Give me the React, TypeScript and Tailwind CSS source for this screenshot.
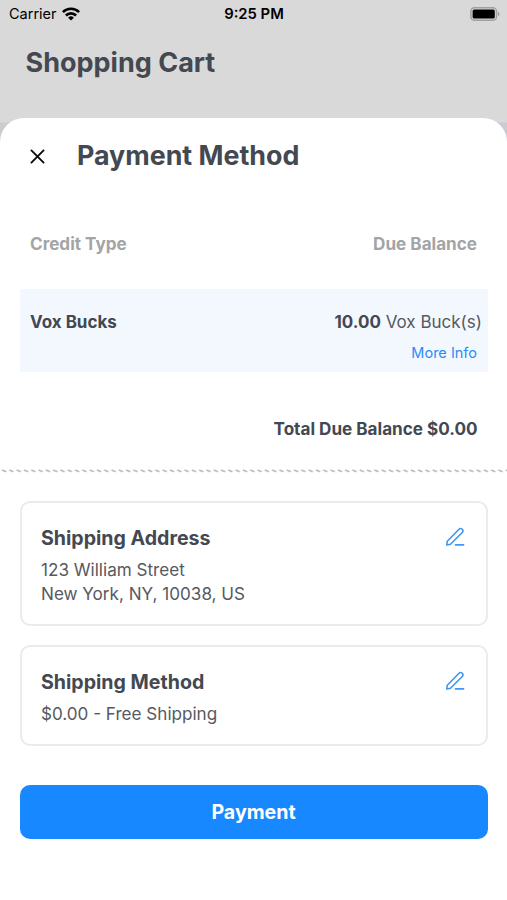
const creditRows = [{ name: 'Vox Bucks', amount: '10.00', unit: 'Vox Buck(s)' }];

const shippingCards = [
  {
    title: 'Shipping Address',
    lines: ['123 William Street', 'New York, NY, 10038, US'],
    size: 'h-[125px]',
  },
  {
    title: 'Shipping Method',
    lines: ['$0.00 - Free Shipping'],
    size: 'mt-[19px] h-[101px]',
  },
];

const WifiIcon = () => (
  <svg width="18" height="14" viewBox="0 0 18 14" fill="none" stroke="#000" strokeWidth="2.6">
    <path d="M0.9 5.2a11.4 11.4 0 0 1 16.2 0" />
    <path d="M3.9 8.5a7.2 7.2 0 0 1 10.2 0" />
    <path d="M9 13.6 6.1 10.7a4.1 4.1 0 0 1 5.8 0z" fill="#000" stroke="none" />
  </svg>
);

const BatteryIcon = () => (
  <svg width="31" height="14" viewBox="0 0 31 14" fill="none">
    <rect x="0.9" y="0.7" width="25.6" height="12.6" rx="3.6" stroke="#a0a0a0" strokeWidth="1.5" />
    <rect x="2.6" y="2.4" width="22.2" height="9.2" rx="1.6" fill="#000" />
    <path d="M28.1 4.8a2.5 2.5 0 0 1 0 4.4z" fill="#909090" />
  </svg>
);

const CloseIcon = () => (
  <svg width="15" height="15" viewBox="0 0 15 15" stroke="#0b0b0b" strokeWidth="1.9" strokeLinecap="round">
    <path d="M1.4 1.4 13.6 13.6M13.6 1.4 1.4 13.6" />
  </svg>
);

const EditIcon = () => (
  <svg
    width="20"
    height="20"
    viewBox="0 0 20 20"
    fill="none"
    stroke="#4294f7"
    strokeWidth="1.6"
    strokeLinecap="round"
    strokeLinejoin="round"
  >
    <path d="M1.8 18 2.3 14.2 14 2.3a2.2 2.2 0 0 1 3.2 3.2L5.5 17.3z" />
    <path d="M10.4 17.9H18.6" />
  </svg>
);

// Slanted dashes across the full width of the sheet
const Divider = () => (
  <svg className="block" width="507" height="4" viewBox="0 0 507 4">
    <defs>
      <pattern id="dashes" width="7.3" height="4" patternUnits="userSpaceOnUse" x="1.3">
        <path d="M0.7 1 4.9 2.8" stroke="#bababa" strokeWidth="1.7" />
      </pattern>
    </defs>
    <rect width="507" height="4" fill="url(#dashes)" />
  </svg>
);

const App = () => {
  return (
    <div className="flex h-[900px] w-[507px] flex-col overflow-hidden bg-[#d9d9d9] font-['Inter',sans-serif] text-[#434851]">
      <header className="h-[118px] shrink-0">
        <div className="flex h-7 items-center justify-between pl-[9px] pr-[6px] text-black">
          <div className="flex flex-1 items-center gap-[5px] text-[14.5px]">
            <span>Carrier</span>
            <WifiIcon />
          </div>
          <span className="pr-0.5 text-[14.8px] font-semibold">9:25 PM</span>
          <div className="flex flex-1 justify-end pb-px">
            <BatteryIcon />
          </div>
        </div>
        <h1 className="mt-[15px] pl-[25.5px] text-[27px] leading-10 font-bold">Shopping Cart</h1>
      </header>

      <div className="flex-1 bg-linear-to-b from-[#d9d9d9] from-[4px] to-[#c9ccd0] to-[5px]">
        <main className="h-full rounded-t-[24px] bg-white">
          <div className="flex h-[75px] items-center pl-[30px]">
            <button aria-label="Close" className="pt-px">
              <CloseIcon />
            </button>
            <h2 className="ml-8 text-[26.8px] font-bold">Payment Method</h2>
          </div>

          <div className="flex h-[96px] items-center justify-between pt-[5px] pr-[30px] pl-[30px] text-[17.1px] font-bold text-[#a3a4a6]">
            <span>Credit Type</span>
            <span>Due Balance</span>
          </div>

          {creditRows.map((row) => (
            <div key={row.name} className="mr-[19px] ml-5 flex h-[83px] justify-between bg-[#f3f8ff] pt-[21px] pl-[10px] text-[17px]">
              <span className="font-bold">{row.name}</span>
              <div className="flex flex-col items-end pr-[6px]">
                <span>
                  <b className="font-bold">{row.amount}</b> <span className="text-[#56595e]">{row.unit}</span>
                </span>
                <a className="mt-[7px] pr-[5px] text-[14.5px] leading-5 text-[#2a8cf5]">More Info</a>
              </div>
            </div>
          ))}

          <p className="flex h-[97px] items-center justify-end pt-4 pr-[29.5px] text-[17.1px] font-bold">
            Total Due Balance $0.00
          </p>
          <Divider />

          <div className="pr-[19px] pl-5 pt-[28px]">
            {shippingCards.map((card) => (
              <section
                key={card.title}
                className={`flex justify-between rounded-[10px] border-2 border-[#ebebec] pt-[19px] pr-[21px] pl-[19px] ${card.size}`}
              >
                <div>
                  <h3 className="mb-1 text-[19.6px] leading-8 font-bold">{card.title}</h3>
                  {card.lines.map((line) => (
                    <p key={line} className="text-[17.1px] leading-6 text-[#56595e]">{line}</p>
                  ))}
                </div>
                <div className="pt-[5px]">
                  <EditIcon />
                </div>
              </section>
            ))}
            <button className="mt-[39px] h-[54px] w-full rounded-[10px] bg-[#1788ff] pt-px pr-px text-[19.6px] font-bold text-white">
              Payment
            </button>
          </div>
        </main>
      </div>
    </div>
  );
};

export default App;
